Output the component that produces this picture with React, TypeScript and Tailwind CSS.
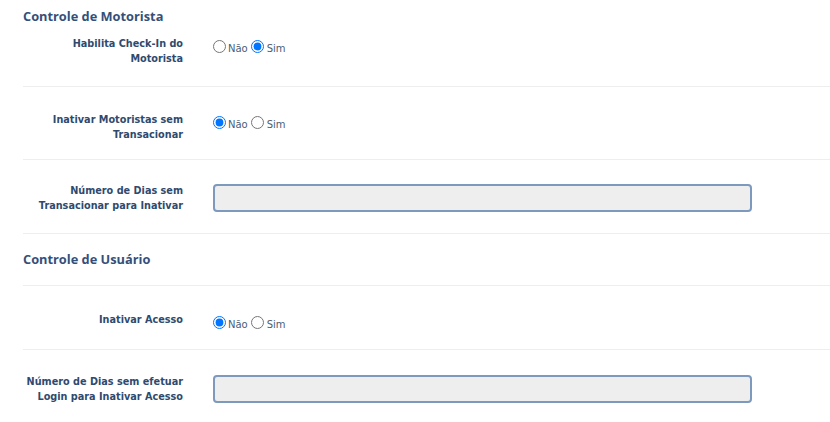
import React from "react";

const labelCls =
  "w-[160px] shrink-0 text-right font-bold text-[9.7px] leading-[15px] text-[#2f4a6e]";
const font = { fontFamily: '"DejaVu Sans", Verdana, sans-serif' };

function Radios({ value }: { value: "nao" | "sim" }) {
  return (
    <div className="ml-[30px] mt-[4px] flex h-[13px] items-center text-[10px] leading-[13px] text-[#4b5d74]">
      <input
        type="radio"
        defaultChecked={value === "nao"}
        className="m-0 h-[13px] w-[13px]"
      />
      <span className="relative top-[2px] ml-[2px]">Não</span>
      <input
        type="radio"
        defaultChecked={value === "sim"}
        className="m-0 ml-[3px] h-[13px] w-[13px]"
      />
      <span className="relative top-[2px] ml-[3px]">Sim</span>
    </div>
  );
}

function Field() {
  return (
    <div className="ml-[30px] h-[28px] w-[539px] shrink-0 rounded-[4px] border-2 border-[#7d99bd] bg-[#eeeeee]" />
  );
}

export default function App() {
  return (
    <div className="w-[830px] h-[422px] overflow-hidden bg-white pl-[23px]" style={font}>
      <div
        className="pt-[6px] pb-[4px] text-[12.8px] leading-[20px] font-bold text-[#34507a]"
        style={{ fontFamily: '"Open Sans", sans-serif' }}
      >
        Controle de Motorista
      </div>
      <div className="flex items-start border-b border-[#eeeeee] pt-[6px] pb-[20px]">
        <div className={labelCls}>
          Habilita Check-In do
          <br />
          Motorista
        </div>
        <Radios value="sim" />
      </div>
      <div className="flex items-start border-b border-[#eeeeee] pt-[25px] pb-[17px]">
        <div className={labelCls}>
          Inativar Motoristas sem
          <br />
          Transacionar
        </div>
        <Radios value="nao" />
      </div>
      <div className="flex items-center border-b border-[#eeeeee] pt-[23px] pb-[20px]">
        <div className={labelCls}>
          Número de Dias sem
          <br />
          Transacionar para Inativar
        </div>
        <Field />
      </div>
      <div
        className="border-b border-[#eeeeee] pt-[15px] pb-[16px] text-[12.8px] leading-[20px] font-bold text-[#34507a]"
        style={{ fontFamily: '"Open Sans", sans-serif' }}
      >
        Controle de Usuário
      </div>
      <div className="flex items-start border-b border-[#eeeeee] pt-[26px] pb-[20px]">
        <div className={labelCls}>Inativar Acesso</div>
        <Radios value="nao" />
      </div>
      <div className="flex items-center pt-[24px]">
        <div className={labelCls}>
          Número de Dias sem efetuar
          <br />
          Login para Inativar Acesso
        </div>
        <Field />
      </div>
    </div>
  );
}
